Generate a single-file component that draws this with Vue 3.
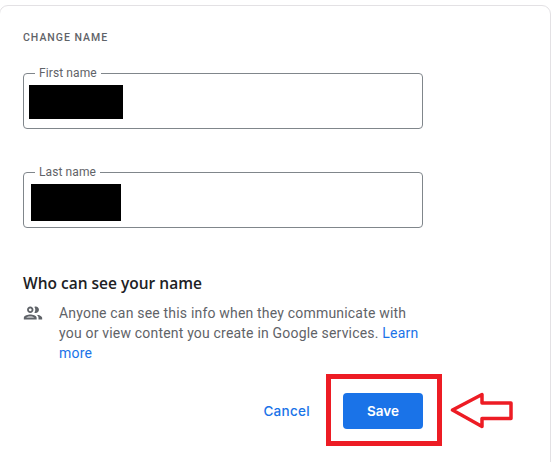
<script setup>
const fields = [
  { label: 'First name', cls: 'first' },
  { label: 'Last name', cls: 'last' },
]
</script>

<template>
  <div class="page">
    <section class="card">
      <h2 class="eyebrow">CHANGE NAME</h2>
      <fieldset v-for="f in fields" :key="f.label" class="field" :class="f.cls">
        <legend>{{ f.label }}</legend>
        <div class="redact"></div>
      </fieldset>
      <h3 class="title">Who can see your name</h3>
      <div class="info">
        <svg class="icon" viewBox="0 0 24 24" width="24" height="24" fill="#5f6368">
          <path d="M9 13.75c-2.34 0-7 1.17-7 3.5V19h14v-1.75c0-2.33-4.66-3.5-7-3.5zM4.34 17c.84-.58 2.87-1.25 4.66-1.25s3.82.67 4.66 1.25H4.34zM9 12c1.93 0 3.5-1.57 3.5-3.5S10.930 5 9 5 5.500 6.570 5.500 8.500 7.070 12 9 12zm0-5c.83 0 1.500.67 1.500 1.500S9.830 10 9 10s-1.500-.67-1.500-1.500S8.170 7 9 7zm7.040 6.810c1.160.84 1.960 1.960 1.960 3.440V19h4v-1.750c0-2.020-3.500-3.170-5.960-3.440zM15 12c1.930 0 3.500-1.570 3.500-3.500S16.930 5 15 5c-.54 0-1.040.13-1.500.35.630.89 1 1.980 1 3.150s-.37 2.260-1 3.150c.46.220.96.350 1.500.350z"/>
        </svg>
        <p>Anyone can see this info when they communicate with you or view content you create in Google services. <a class="link">Learn more</a></p>
      </div>
      <div class="actions">
        <button class="cancel">Cancel</button>
        <button class="save">Save</button>
      </div>
    </section>
    <div class="red-box"></div>
    <svg class="arrow" viewBox="0 0 553 462" width="553" height="462">
      <path d="M452.500 410 L482 394.500 L482 403 L511 403 L511 418.500 L482 418.500 L482 426.500 Z" fill="#fff" stroke="#ed1c24" stroke-width="3.500" stroke-linejoin="round"/>
    </svg>
  </div>
</template>

<style>
html, body { margin: 0; background: #fff; }
</style>

<style scoped>
.page {
  position: relative;
  width: 553px;
  height: 462px;
  overflow: hidden;
  background: #fff;
  font-family: Roboto, "Liberation Sans", sans-serif;
}
.card {
  box-sizing: border-box;
  width: 552px;
  height: 480px;
  margin: 5px 0 0 -1px;
  padding: 26px 23px 0;
  border: 1px solid #e3e1e4;
  border-radius: 9px;
}
.eyebrow {
  margin: 0 0 22px;
  font-size: 10.500px;
  line-height: 12px;
  font-weight: 500;
  letter-spacing: 1px;
  color: #5f6368;
}
.field {
  box-sizing: border-box;
  position: relative;
  width: 400px;
  height: 63px;
  margin: 0 0 36px;
  padding: 0;
  border: 1px solid #80868b;
  border-radius: 4px;
}
.field legend {
  margin-left: 11px;
  padding: 0 4px;
  font-size: 12px;
  line-height: 14px;
  letter-spacing: 0.1px;
  color: #5f6368;
}
.redact { background: #000; }
.first .redact { width: 94px; height: 34px; margin: 5px 0 0 5px; }
.last .redact { width: 90px; height: 37px; margin: 5px 0 0 7px; }
.title {
  margin: 44px 0 9px;
  font-family: "Open Sans", Roboto, sans-serif;
  font-size: 15.500px;
  line-height: 22px;
  font-weight: 600;
  color: #202124;
}
.info {
  display: flex;
  align-items: flex-start;
  gap: 15px;
  width: 400px;
}
.icon { flex: none; width: 22px; height: 22px; margin: -1px 0 0 -1px; }
.info p {
  width: 362px;
  margin: 0;
  font-size: 14px;
  line-height: 20px;
  letter-spacing: 0.19px;
  color: #5f6368;
}
.link { color: #1a73e8; }
.actions {
  display: flex;
  align-items: center;
  justify-content: flex-end;
  width: 400px;
  margin-top: 30px;
  gap: 33px;
}
button {
  font-family: Inter, Roboto, sans-serif;
  font-size: 13.500px;
  font-weight: 500;
  border: 0;
  padding: 0;
}
.cancel { background: none; color: #1a73e8; letter-spacing: 0.3px; }
.save {
  width: 80px;
  height: 36px;
  border-radius: 4px;
  background: #1a73e8;
  color: #fff;
  font-weight: 600;
}
.red-box {
  box-sizing: border-box;
  position: absolute;
  left: 326px;
  top: 374px;
  width: 116px;
  height: 72px;
  border: 5px solid #ed1c24;
}
.arrow { position: absolute; left: 0; top: 0; pointer-events: none; }
</style>
